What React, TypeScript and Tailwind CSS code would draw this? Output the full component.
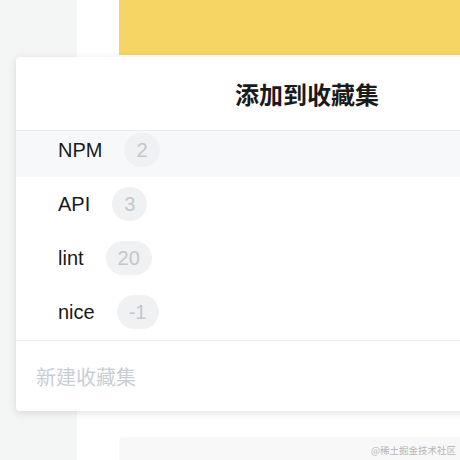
import React from "react";

const collections = [
  { name: "NPM", count: "2" },
  { name: "API", count: "3" },
  { name: "lint", count: "20" },
  { name: "nice", count: "-1" },
];

export default function App() {
  return (
    <div
      className="relative h-[460px] w-full overflow-hidden bg-white"
      style={{ fontFamily: '"Liberation Sans", "Noto Sans CJK SC", sans-serif' }}
    >
      <div className="flex h-full">
        <aside className="w-[77px] shrink-0 bg-[#f4f5f5]" />
        <main className="flex flex-1 flex-col pl-[42px]">
          <div className="h-[55px] bg-[#f6d564]" />
          <div className="flex-1" />
          <div className="h-[23px] rounded-tl bg-[#f8f8f9]" />
        </main>
      </div>

      {/* dialog */}
      <div className="absolute left-4 top-[57px] w-[582px] rounded bg-white shadow-[0_2px_8px_rgba(0,0,0,0.12)]">
        <div className="flex h-[74px] items-center justify-center border-b border-[#ebedf0] pt-1">
          <h2 className="text-[24px] font-bold text-[#1a1a1a]">添加到收藏集</h2>
        </div>
        <div className="h-[210px] overflow-hidden border-b border-[#ebedf0]">
          <ul className="-mt-2">
            {collections.map((c, i) => (
              <li
                key={c.name}
                className={`flex h-[54px] items-center gap-[22px] pl-[42px] ${
                  i === 0 ? "bg-[#f7f8fa]" : ""
                }`}
              >
                <span className="text-[20px] text-[#1a1a1a]">{c.name}</span>
                <span className="flex h-[34px] min-w-[34px] items-center justify-center rounded-full bg-[#f0f1f2] px-3 text-[20px] text-[#c2c7cf]">
                  {c.count}
                </span>
              </li>
            ))}
          </ul>
        </div>
        <div className="flex h-[70px] items-center pl-5 pt-1">
          <span className="text-[20px] text-[#c9cdd4]">新建收藏集</span>
        </div>
      </div>

      <span
        className="absolute bottom-[3px] right-1 text-[9.5px] text-[#b5b5b5]"
        style={{ fontFamily: '"Noto Sans CJK SC", serif' }}
      >
        @稀土掘金技术社区
      </span>
    </div>
  );
}
